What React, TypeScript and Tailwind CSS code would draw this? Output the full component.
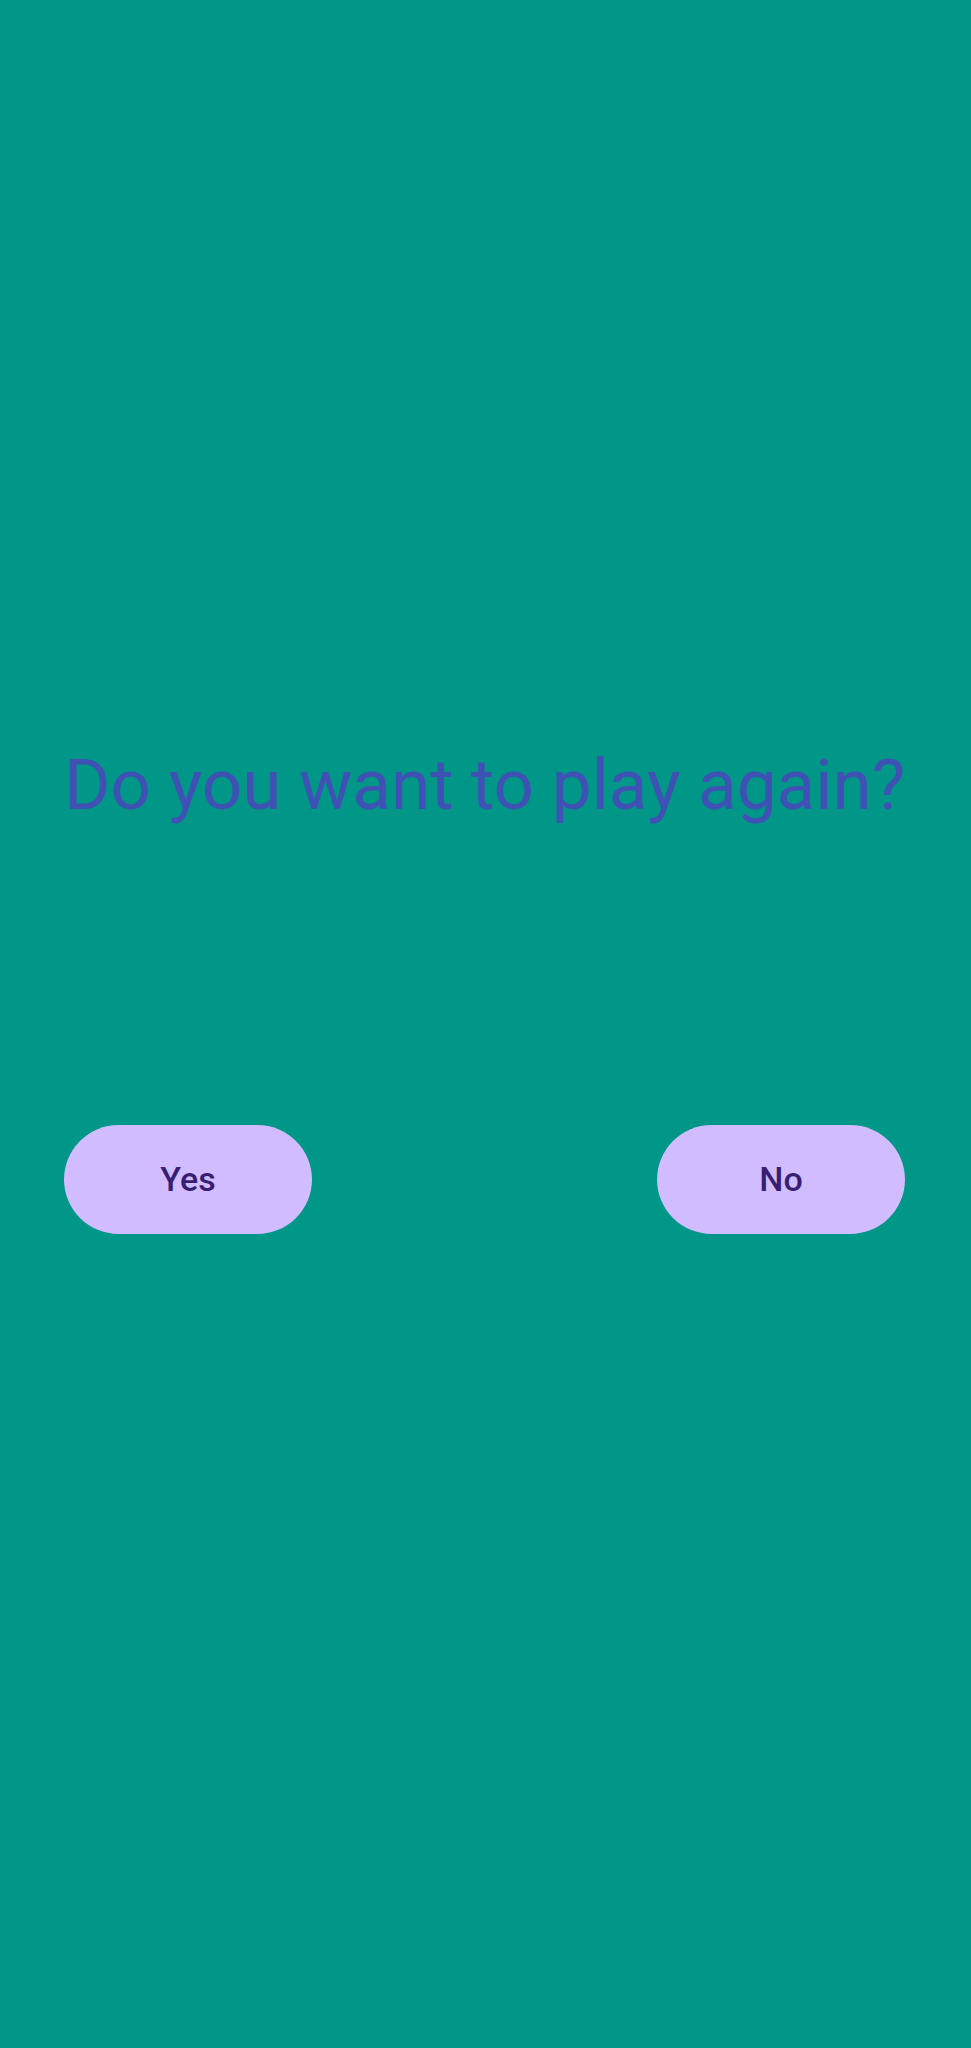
export default function App() {
  return (
    <main
      className="min-h-[2048px] w-full bg-[#009688] flex flex-col pl-[64px] pr-[66px]"
      style={{ fontFamily: "Roboto, 'Noto Sans', sans-serif" }}
    >
      <h1 className="mt-[744px] pr-[3px] text-center text-[71px] leading-[82px] font-normal text-[#3f51b5] whitespace-nowrap">
        Do you want to play again?
      </h1>

      <div className="mt-[299px] flex justify-between">
        <button className="w-[248px] h-[109px] rounded-full bg-[#d0bcff] text-[#381e72] text-[34px] font-medium">
          Yes
        </button>
        <button className="w-[248px] h-[109px] rounded-full bg-[#d0bcff] text-[#381e72] text-[34px] font-medium">
          No
        </button>
      </div>
    </main>
  );
}
